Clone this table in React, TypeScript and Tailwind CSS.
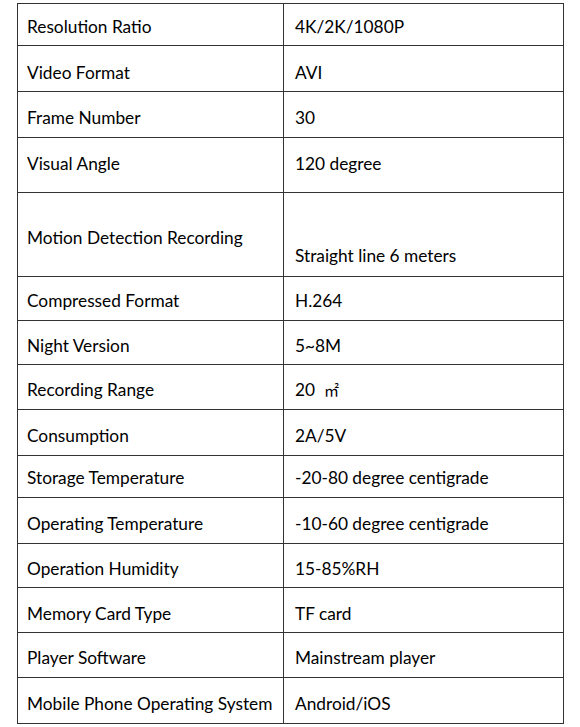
import React from 'react';

type Spec = {
  label: string;
  value: React.ReactNode;
  h: string;
  pad?: string;
  valueCell?: string;
};

const specs: Spec[] = [
  { label: 'Resolution Ratio', value: '4K/2K/1080P', h: 'h-[42px]', pad: 'pt-[4px]' },
  { label: 'Video Format', value: 'AVI', h: 'h-[46px]', pad: 'pt-[8px]' },
  { label: 'Frame Number', value: '30', h: 'h-[46px]' },
  { label: 'Visual Angle', value: '120 degree', h: 'h-[55px]', pad: 'pb-[2px]' },
  {
    label: 'Motion Detection Recording',
    value: 'Straight line 6 meters',
    h: 'h-[84px]',
    valueCell: 'self-end pb-[10px]',
  },
  { label: 'Compressed Format', value: 'H.264', h: 'h-[44px]', pad: 'pt-[5px]' },
  { label: 'Night Version', value: '5~8M', h: 'h-[44px]' },
  {
    label: 'Recording Range',
    value: (
      <>
        20{'\u00a0\u00a0'}
        <span className="font-['Noto_Sans_CJK_SC',sans-serif] text-[15px]">㎡</span>
      </>
    ),
    h: 'h-[45px]',
  },
  { label: 'Consumption', value: '2A/5V', h: 'h-[46px]' },
  { label: 'Storage Temperature', value: '-20-80 degree centigrade', h: 'h-[42px]', pad: 'pt-[3px]' },
  { label: 'Operating Temperature', value: '-10-60 degree centigrade', h: 'h-[46px]' },
  { label: 'Operation Humidity', value: '15-85%RH', h: 'h-[44px]' },
  { label: 'Memory Card Type', value: 'TF card', h: 'h-[45px]', pad: 'pt-[8px]' },
  { label: 'Player Software', value: 'Mainstream player', h: 'h-[45px]' },
  { label: 'Mobile Phone Operating System', value: 'Android/iOS', h: 'h-[46px]' },
];

const App: React.FC = () => {
  return (
    <div className="min-h-screen bg-white pt-[3px] font-['Lato',sans-serif] text-[17.3px] leading-[20px] text-black">
      <div className="ml-[17px] w-[547px] border-x border-t border-[#333]">
        {specs.map((s) => (
          <div
            key={s.label}
            className={`grid grid-cols-[266px_1fr] border-b border-[#333] ${s.h}`}
          >
            <div className={`flex items-center border-r border-[#333] pl-[9px] ${s.pad ?? 'pt-[6px]'}`}>
              {s.label}
            </div>
            <div className={`flex items-center pl-[11px] ${s.pad ?? 'pt-[6px]'} ${s.valueCell ?? ''}`}>
              <span>{s.value}</span>
            </div>
          </div>
        ))}
      </div>
    </div>
  );
};

export default App;
